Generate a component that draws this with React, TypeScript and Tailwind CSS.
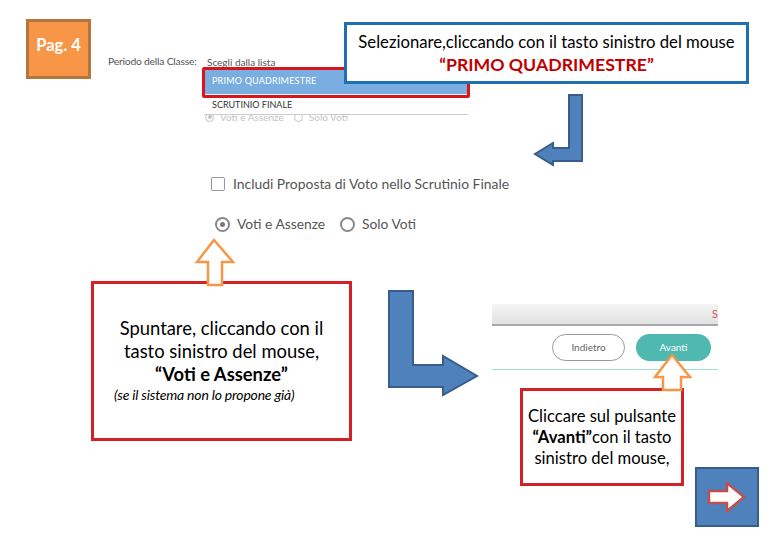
import React from "react";

const SLIDE_FONT = { fontFamily: "Lato, 'Noto Sans', sans-serif" };

function SlideArrows() {
  return (
    <svg className="absolute left-0 top-0" width="780" height="540" viewBox="0 0 780 540">
      <polygon
        points="569,95 582,95 582,161 553,161 553,165 535,154 553,143 553,148 569,148"
        fill="#4f81bd"
        stroke="#385d8a"
        strokeWidth="2"
      />
      <polygon
        points="389,291 413,291 413,365 443,365 443,356 477,376 443,395 443,387 389,387"
        fill="#4f81bd"
        stroke="#385d8a"
        strokeWidth="2"
      />
      {/* orange up arrows */}
      <polygon
        points="214,240 233,262 222,262 222,285 208,285 208,262 197,262"
        fill="#ffffff"
        stroke="#f79646"
        strokeWidth="2.5"
      />
      <polygon
        points="672,355 690,377 681,377 681,390 663,390 663,377 655,377"
        fill="#ffffff"
        stroke="#f79646"
        strokeWidth="2.5"
      />
    </svg>
  );
}

function NavButton() {
  return (
    <div className="absolute left-[695px] top-[467px] w-[64px] h-[60px] bg-[#4f81bd] border-2 border-[#385d8a] flex items-center justify-center">
      <svg width="40" height="32" viewBox="0 0 40 32">
        <polygon
          points="2,10 20,10 20,2 37,16 20,30 20,22 2,22"
          fill="#ffffff"
          stroke="#c0504d"
          strokeWidth="2.5"
        />
      </svg>
    </div>
  );
}

export default function App() {
  return (
    <div className="relative w-[780px] h-[540px] bg-white overflow-hidden" style={SLIDE_FONT}>
      {/* page badge */}
      <div className="absolute left-[26px] top-[19px] w-[65px] h-[60px] bg-[#f79646] border-[3px] border-[#b4753f] flex items-center justify-center">
        <span className="text-white font-bold text-[16.5px] -mt-[7px]">Pag. 4</span>
      </div>

      {/* app screenshot: period select */}
      <div className="absolute left-[108px] top-[54px] text-[10.3px] text-[#555] tracking-[-0.2px]">Periodo della Classe:</div>
      <div className="absolute left-[207px] top-[55px] text-[10px] text-[#555] underline">Scegli dalla lista</div>

      <div className="absolute left-[205px] top-[110px] flex items-center gap-[6px] text-[10px] leading-[14px] text-[#c4c4c4]">
        <span className="w-[9px] h-[9px] rounded-full border border-[#c4c4c4] flex items-center justify-center">
          <span className="w-[4px] h-[4px] rounded-full bg-[#c4c4c4]" />
        </span>
        <span>Voti e Assenze</span>
        <span className="w-[9px] h-[9px] rounded-full border border-[#c4c4c4] ml-[4px]" />
        <span>Solo Voti</span>
      </div>

      <div className="absolute left-[204px] top-[68px] w-[264px] h-[47px] bg-white border-b border-[#ccc]">
        <div className="h-[26px] bg-[#7aaee0] flex items-center px-[8px] text-[9px] text-white tracking-[0.2px]">
          PRIMO QUADRIMESTRE
        </div>
        <div className="h-[21px] flex items-center px-[8px] text-[9px] text-[#333]">SCRUTINIO FINALE</div>
      </div>
      <div className="absolute left-[202px] top-[67px] w-[268px] h-[31px] border-[3px] border-[#d9141b] rounded-[2px]" />

      {/* top callout */}
      <div className="absolute left-[344px] top-[22px] w-[405px] h-[62px] bg-white border-[3px] border-[#1f6fb2] flex flex-col items-center justify-center leading-[22px]">
        <div className="text-[16.7px] text-black">Selezionare,cliccando con il tasto sinistro del mouse</div>
        <div className="text-[17.7px] font-bold text-[#c00000] mt-[1px]">“PRIMO QUADRIMESTRE”</div>
      </div>

      {/* checkbox + radios */}
      <div className="absolute left-[211px] top-[174px] flex items-center gap-[8px] text-[13.9px] text-[#555]">
        <span className="w-[14px] h-[14px] rounded-[2px] border-[1.5px] border-[#999] bg-white" />
        <span>Includi Proposta di Voto nello Scrutinio Finale</span>
      </div>
      <div className="absolute left-[215px] top-[214px] flex items-center text-[13.8px] text-[#555]">
        <span className="w-[15px] h-[15px] rounded-full border-2 border-[#888] flex items-center justify-center">
          <span className="w-[5px] h-[5px] rounded-full bg-[#777]" />
        </span>
        <span className="ml-[7px]">Voti e Assenze</span>
        <span className="w-[15px] h-[15px] rounded-full border-2 border-[#888] ml-[15px]" />
        <span className="ml-[7px]">Solo Voti</span>
      </div>

      {/* left instruction box */}
      <div className="absolute left-[91px] top-[281px] w-[261px] h-[160px] border-[3px] border-[#d42027] bg-white">
        <div className="flex flex-col items-center pt-[33px] text-[18.4px] text-black leading-[23px]">
          <span>Spuntare, cliccando con il</span>
          <span>tasto sinistro del mouse,</span>
          <span className="font-bold">“Voti e Assenze”</span>
        </div>
        <div className="pl-[20px] mt-[1px] text-[14px] leading-[16px] italic text-black tracking-[-0.2px]">(se il sistema non lo propone già)</div>
      </div>

      {/* app screenshot: buttons */}
      <div className="absolute left-[492px] top-[304px] w-[226px] h-[22px] bg-gradient-to-b from-[#f4f4f4] to-[#e2e2e2] border-b-2 border-[#a8a8a8]">
        <span className="absolute right-0 top-[3px] text-[11px] leading-[14px] text-[#e05050]">S</span>
      </div>
      <div className="absolute left-[552px] top-[334px] w-[73px] h-[27px] rounded-full border border-[#999] bg-white flex items-center justify-center text-[10px] text-[#666]">
        Indietro
      </div>
      <div className="absolute left-[636px] top-[334px] w-[75px] h-[27px] rounded-full bg-[#4fb9af] flex items-center justify-center text-[10px] text-white">
        Avanti
      </div>
      <div className="absolute left-[492px] top-[369px] w-[226px] h-px bg-[#9fe0cf]" />

      {/* right instruction box */}
      <div className="absolute left-[520px] top-[388px] w-[164px] h-[98px] border-[3px] border-[#d42027] bg-white flex flex-col items-center pt-[15px] text-[16.6px] text-black leading-[21px]">
        <span>Cliccare sul pulsante</span>
        <span>
          <span className="font-bold">“Avanti”</span>con il tasto
        </span>
        <span>sinistro del mouse,</span>
      </div>

      <SlideArrows />
      <NavButton />
    </div>
  );
}
